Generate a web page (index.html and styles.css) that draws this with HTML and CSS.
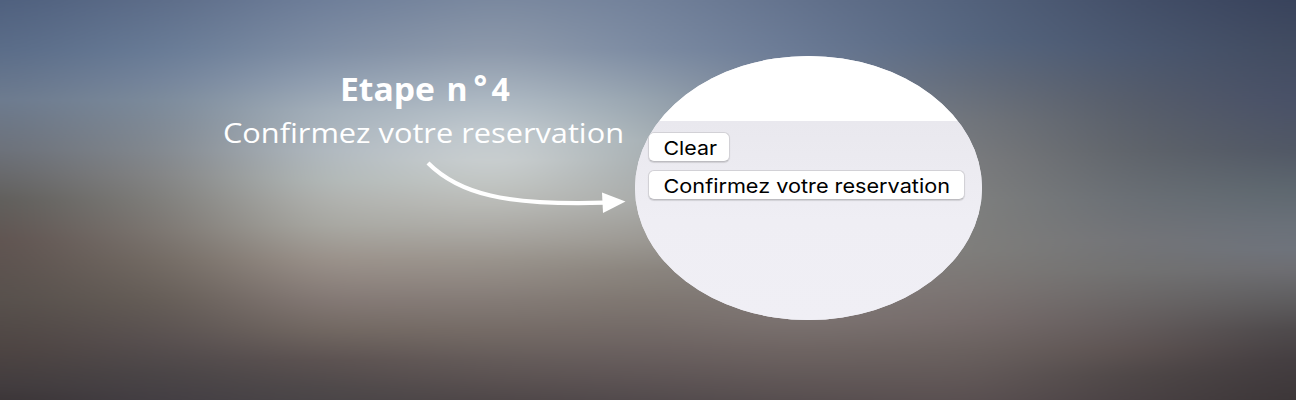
FILE: index.html
```html
<!DOCTYPE html>
<html lang="fr">
<head>
<meta charset="utf-8">
<title>Etape n°4</title>
<link rel="stylesheet" href="styles.css">
</head>
<body>
<main class="hero">
  <svg class="defs" width="0" height="0"><filter id="soften" x="0" y="0" width="1" height="1" color-interpolation-filters="sRGB"><feGaussianBlur stdDeviation="32 0"/></filter></svg>
  <div class="backdrop">
    <i class="tone tone-1"></i><i class="tone tone-2"></i><i class="tone tone-3"></i>
    <i class="tone tone-4"></i><i class="tone tone-5"></i><i class="tone tone-6"></i>
    <i class="tone tone-7"></i><i class="tone tone-8"></i><i class="tone tone-9"></i>
  </div>
  <section class="caption">
    <svg class="title" width="172" height="42" role="heading"><text y="33"><tspan x="0" textLength="95" lengthAdjust="spacingAndGlyphs">Etape</tspan> <tspan x="106.500">n</tspan><tspan x="133.500" y="31">°</tspan><tspan x="151.500" y="33">4</tspan></text></svg>
    <svg class="subtitle" width="402" height="40"><text x="0" y="29" textLength="401" lengthAdjust="spacingAndGlyphs">Confirmez votre reservation</text></svg>
    <svg class="arrow" width="200" height="56" viewBox="0 0 200 56">
      <path class="arrow-line" d="M3 7C34 38 80 49.500 179 46.700"/>
      <path class="arrow-head" d="M177 36.500L200.500 45.500L178 57Z"/>
    </svg>
  </section>
  <section class="lens">
    <div class="sheet"></div>
    <div class="panel">
      <button class="btn btn-clear"><svg width="55" height="26"><text x="0.500" y="20" textLength="53.500" lengthAdjust="spacingAndGlyphs">Clear</text></svg></button>
      <button class="btn btn-confirm"><svg width="288" height="26"><text x="0.500" y="20" textLength="286.500" lengthAdjust="spacingAndGlyphs">Confirmez votre reservation</text></svg></button>
    </div>
  </section>
</main>
</body>
</html>
```
FILE: styles.css
```css
body { margin: 0; }

.hero {
  position: relative;
  display: flex;
  align-items: flex-start;
  box-sizing: border-box;
  width: 1296px;
  height: 400px;
  padding: 56px 0 0 223px;
  overflow: hidden;
}
.defs { position: absolute; }

/* Backdrop: vertical colour ramps cross-faded from left to right,
   overhanging both sides so the softening never reaches the edges */
.backdrop { position: absolute; inset: 0 -120px; filter: url(#soften); }
.tone {
  --fade: linear-gradient(90deg, transparent calc(var(--from) + 120px), #000 calc(var(--to) + 120px));
  position: absolute;
  inset: 0;
  background: linear-gradient(var(--ramp));
  -webkit-mask-image: var(--fade);
  mask-image: var(--fade);
}
.tone-1 { --ramp: #4f607e 0, #5a6c88 50px, #6c7a8e 100px, #6b7079 150px, #66676a 175px, #5f5d5a 200px, #5f5350 240px, #57504c 300px, #4d4442 350px, #423c3e 385px, #3c3638 400px; -webkit-mask-image: none; mask-image: none; }
.tone-2 { --from: 0px; --to: 160px; --ramp: #5d6d89 0, #687b96 50px, #74849b 80px, #7b8a9b 100px, #82888f 150px, #838485 175px, #7f7e7b 200px, #7c7671 230px, #736b64 260px, #655d57 300px, #585050 340px, #4a4547 375px, #443f44 400px; }
.tone-3 { --from: 160px; --to: 324px; --ramp: #6f7f9a 0, #808fa5 50px, #919fb1 80px, #a4b0bb 110px, #b1bac1 150px, #b3bab9 180px, #b1b3b0 200px, #aaaaa4 225px, #9c938c 260px, #857a76 300px, #736963 330px, #5d5352 360px, #504a4b 385px, #4b4648 400px; }
.tone-4 { --from: 324px; --to: 500px; --ramp: #7c8aa0 0, #8f9bac 50px, #afbac4 100px, #c3cbd0 130px, #ccd1d2 160px, #c5c9c7 180px, #babbb7 205px, #acaaa5 230px, #9a948d 260px, #857c77 300px, #766c67 330px, #655c5a 360px, #504849 400px; }
.tone-5 { --from: 500px; --to: 640px; --ramp: #73829b 0, #7d8ca3 50px, #99a6b1 100px, #abb5b9 140px, #abadab 200px, #9d9a94 240px, #8b857e 270px, #7f7771 300px, #6b6160 350px, #534b4d 400px; }
.tone-6 { --from: 640px; --to: 800px; --ramp: #63728d 0, #6a7a95 50px, #8f9192 200px, #7c7371 320px, #6f6563 350px, #584f50 400px; }
.tone-7 { --from: 800px; --to: 972px; --ramp: #53627c 0, #56667f 40px, #636c7b 80px, #71757b 120px, #7a7b7d 160px, #7e7f7e 200px, #7f7e7b 250px, #7c7573 290px, #766c6b 320px, #6b6260 350px, #5b5152 400px; }
.tone-8 { --from: 972px; --to: 1130px; --ramp: #445069 0, #4b5870 50px, #565d6b 100px, #5f646b 150px, #6a6f75 200px, #737478 240px, #727272 270px, #6b6767 300px, #635b5b 330px, #5d5352 350px, #4f4848 375px, #4a4244 400px; }
.tone-9 { --from: 1130px; --to: 1296px; --ramp: #38425b 0, #414b60 50px, #485067 100px, #505765 150px, #5d676f 190px, #697079 225px, #6e737c 250px, #6d6d72 270px, #5e5d5f 300px, #4d494b 330px, #433d40 360px, #3c3638 400px; }

.caption {
  position: relative;
  display: flex;
  flex-direction: column;
  align-items: center;
  width: 402px;
  margin: 12px 10px 0 0;
}
.caption svg { display: block; overflow: visible; }
.title { margin-left: 4px; }
.title text { font: 700 32px "Open Sans", sans-serif; fill: #fff; }
.subtitle { margin-top: 4px; }
.subtitle text { font: 400 28px "Open Sans", sans-serif; fill: #fff; }
.arrow { align-self: flex-end; margin-top: 2px; }
.arrow-line { fill: none; stroke: #fff; stroke-width: 4.2; }
.arrow-head { fill: #fff; }

.lens {
  position: relative;
  width: 347px;
  height: 264px;
  border-radius: 50%;
  overflow: hidden;
  background: #efeef4;
}
.sheet { height: 65px; background: #fff; }
.panel {
  display: flex;
  flex-direction: column;
  align-items: flex-start;
  gap: 8px;
  height: 188px;
  padding: 11px 0 0 13px;
  background: linear-gradient(#e9e8ee, #efeef4 50%, #f0eff5);
}
.btn {
  box-sizing: border-box;
  height: 30px;
  padding: 1px 0 0 14px;
  border: 1px solid #d2d1d6;
  border-bottom-color: #bdbcc1;
  border-radius: 6px;
  background: #fff;
  box-shadow: 0 1px 1px rgba(0, 0, 0, .12);
}
.btn svg { display: block; overflow: visible; }
.btn text { font: 400 19px Inter, sans-serif; fill: #000; }
.btn-clear { width: 82px; }
.btn-confirm { width: 317px; }
```
